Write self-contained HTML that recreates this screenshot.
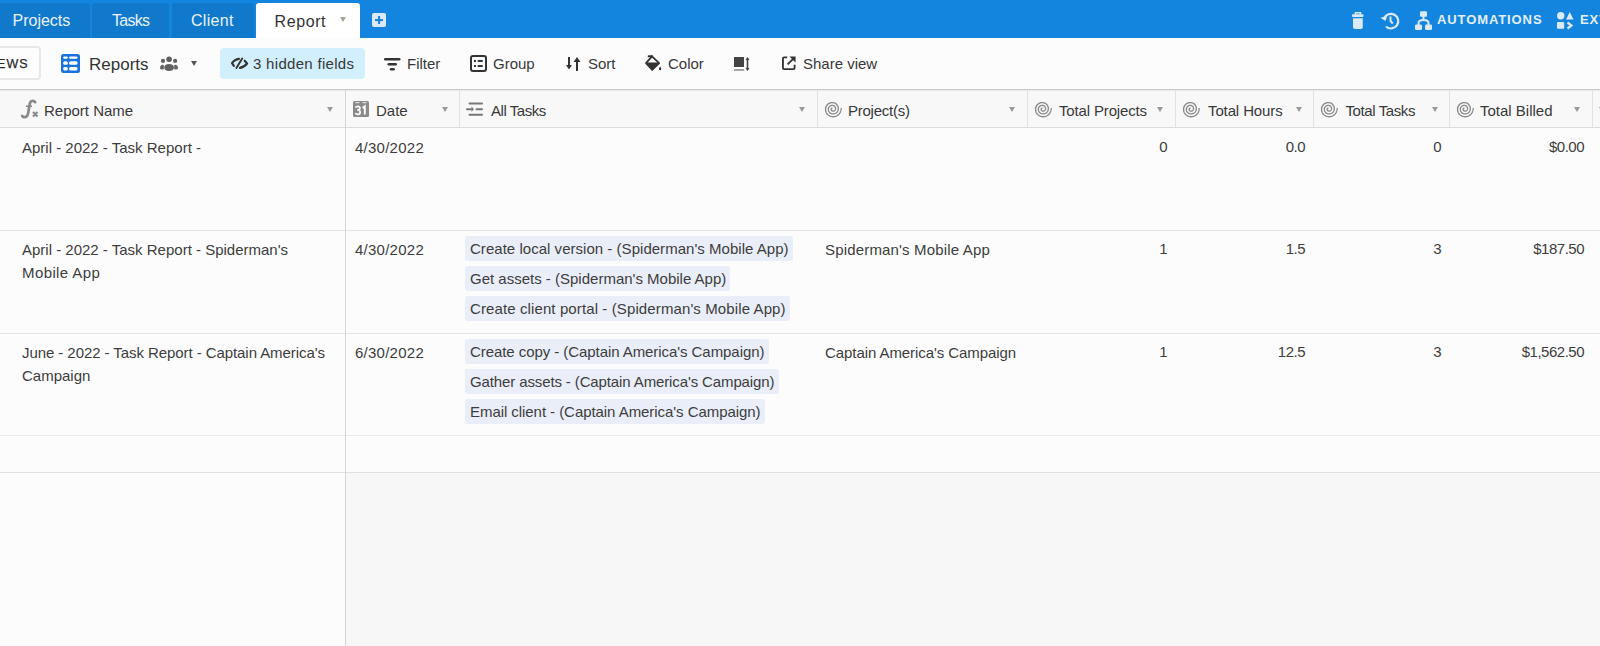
<!DOCTYPE html>
<html><head><meta charset="utf-8">
<style>
*{margin:0;padding:0;box-sizing:border-box}
html,body{width:1600px;height:646px;overflow:hidden;background:#fcfcfc;font-family:"Liberation Sans",sans-serif;color:#333;position:relative}
.a{position:absolute;white-space:nowrap}
svg{position:absolute;overflow:visible}
#top{position:absolute;left:0;top:0;width:1600px;height:38px;background:#1385de}
.tab{position:absolute;top:3px;height:35px;background:#1079cc;border-radius:3px 3px 0 0;color:#eaf2fb;font-size:16px;line-height:17px}
.tab span{position:absolute;top:9px}
#tb{position:absolute;left:0;top:38px;width:1600px;height:51px;background:#fcfcfc}
.t15{font-size:15px;line-height:17px;color:#383838}
#hdr{position:absolute;left:0;top:89px;width:1600px;height:39px;background:#f8f8f9;border-top:1px solid #c9c9c9;border-bottom:1px solid #dcdcdc}
#hdr2{position:absolute;left:0;top:90px;width:1600px;height:1px;background:#e9e9e9}
.arr{position:absolute;width:0;height:0;border-left:3.5px solid transparent;border-right:3.5px solid transparent;border-top:5px solid #9a9a9a}
.hv{position:absolute;top:90px;height:37px;width:1px;background:#e2e2e2}
.hl{position:absolute;height:1px;background:#e3e5e8;left:0;width:1600px}
.bt{font-size:15px;color:#3d3d3d;line-height:23px;position:absolute;white-space:nowrap}
.pill{position:absolute;left:465px;height:25px;background:#e9eef8;border-radius:3px;font-size:15px;line-height:25px;padding:0 4px 0 5px;color:#3d3d3d;white-space:nowrap}
.num{position:absolute;font-size:15px;color:#3d3d3d;line-height:17px;text-align:right;white-space:nowrap}
</style></head><body>

<div id="top">
  <div class="tab" style="left:-10px;width:100px"><span style="left:22.5px">Projects</span></div>
  <div class="tab" style="left:92px;width:77px"><span style="left:20px;letter-spacing:-0.7px">Tasks</span></div>
  <div class="tab" style="left:172px;width:82px"><span style="left:19px;letter-spacing:0.3px">Client</span></div>
  <div class="tab" style="left:256px;width:104px;background:#fff;color:#333"><span style="left:18.5px;top:10px;letter-spacing:0.6px">Report</span></div>
  <div class="arr" style="left:340px;top:16.5px;border-top-color:#a8a29a"></div>
  <svg style="left:372px;top:13px" width="14" height="14"><rect x="0" y="0" width="14" height="14" rx="2" fill="#dbe9f8"/><rect x="6.1" y="3" width="2" height="8" fill="#1385de"/><rect x="3" y="6.1" width="8" height="2" fill="#1385de"/></svg>
  <svg style="left:1352px;top:12px" width="12" height="17" viewBox="0 0 12 17"><path d="M3.5 2.6V0.8H8.5V2.6" fill="none" stroke="#dbe9f8" stroke-width="1.5"/><rect x="0" y="2.2" width="11.5" height="2.8" rx="1" fill="#dbe9f8"/><path d="M1 6.3H10.8V15Q10.8 16.9 9 16.9H2.8Q1 16.9 1 15Z" fill="#dbe9f8"/></svg>
  <svg style="left:1380px;top:11px" width="20" height="19" viewBox="0 0 20 19"><path d="M4.2 7.5A7.3 7.3 0 1 1 6 15.5" fill="none" stroke="#dbe9f8" stroke-width="2.2"/><path d="M0.5 6.8L5.5 10L7.2 4.8Z" fill="#dbe9f8"/><path d="M10.5 5.5V10L12.8 12.5" fill="none" stroke="#dbe9f8" stroke-width="2"/></svg>
  <svg style="left:1415px;top:11px" width="17" height="19" viewBox="0 0 17 19"><rect x="5" y="0.3" width="7" height="5.5" rx="1.2" fill="#dbe9f8"/><rect x="0" y="13.5" width="7" height="5.5" rx="1.2" fill="#dbe9f8"/><rect x="10" y="13.5" width="7" height="5.5" rx="1.2" fill="#dbe9f8"/><path d="M8.5 5V8M3.5 14V12Q3.5 9 8.5 9Q13.5 9 13.5 12V14" fill="none" stroke="#dbe9f8" stroke-width="2"/></svg>
  <div class="a" style="left:1437px;top:12px;font-size:13px;line-height:15px;font-weight:bold;color:#e3eefa;letter-spacing:0.9px">AUTOMATIONS</div>
  <svg style="left:1557px;top:12px" width="17" height="17" viewBox="0 0 17 17"><circle cx="3.7" cy="3.8" r="3.7" fill="#dbe9f8"/><path d="M12.8 0L16.5 7.5H9Z" fill="#dbe9f8"/><rect x="0" y="10" width="7.2" height="6.8" rx="1" fill="#dbe9f8"/><path d="M10.5 10.5L14.5 13.5L10.5 16.5" fill="none" stroke="#dbe9f8" stroke-width="2.2"/></svg>
  <div class="a" style="left:1580px;top:12px;font-size:13px;line-height:15px;font-weight:bold;color:#e3eefa;letter-spacing:0.9px">EXTENSIONS</div>
</div>


<div id="tb">
  <div class="a" style="left:-6px;top:8px;width:47px;height:34px;border:2px solid #e8e8e8;border-radius:4px;background:#fdfdfd"></div>
  <div class="a" style="left:-17px;top:19px;font-size:12.5px;line-height:14px;letter-spacing:1.1px;color:#2a2a2a;-webkit-text-stroke:0.25px #2a2a2a">VIEWS</div>
  <svg style="left:61px;top:16px" width="19" height="19" viewBox="0 0 19 19"><rect x="0" y="0" width="19" height="19" rx="2.5" fill="#1a72dc"/><rect x="2.2" y="2.4" width="4.6" height="2.4" rx="1.2" fill="#fff"/><rect x="8.1" y="2.4" width="8.4" height="2.4" rx="1.2" fill="#fff"/><rect x="2.2" y="7.2" width="4.6" height="3.5" rx="1.5" fill="#fff"/><rect x="8.1" y="7.2" width="8.4" height="3.5" rx="1.5" fill="#fff"/><rect x="2.2" y="13.1" width="4.6" height="3.3" rx="1.5" fill="#fff"/><rect x="8.1" y="13.1" width="8.4" height="3.3" rx="1.5" fill="#fff"/></svg>
  <div class="a" style="left:89px;top:17px;font-size:17px;line-height:19px;color:#333">Reports</div>
  <svg style="left:160px;top:18px" width="18" height="15" viewBox="0 0 18 15"><circle cx="9.1" cy="3.3" r="2.8" fill="#606060"/><circle cx="3" cy="4.9" r="2.1" fill="#606060"/><circle cx="15.1" cy="4.9" r="2.1" fill="#606060"/><path d="M4.3 11.5Q4.3 7.9 9.1 7.9Q13.9 7.9 13.9 11.5Q13.9 14.9 9.1 14.9Q4.3 14.9 4.3 11.5Z" fill="#606060"/><path d="M0 12.5Q0 8.8 3 8.8Q3.8 8.8 3.8 9.5V13.3Q2.5 13.5 0.8 13.3Z" fill="#606060"/><path d="M18 12.5Q18 8.8 15 8.8Q14.2 8.8 14.2 9.5V13.3Q15.5 13.5 17.2 13.3Z" fill="#606060"/></svg>
  <div class="arr" style="left:191px;top:23px;border-left-width:3.5px;border-right-width:3.5px;border-top:5.5px solid #555"></div>
  <div class="a" style="left:220px;top:10px;width:145px;height:31px;background:#d1effc;border-radius:4px"></div>
  <svg style="left:231px;top:19px" width="18" height="13" viewBox="0 0 18 13"><path d="M8 1.9Q3.5 2.4 1 6.2L2.9 8.9" fill="none" stroke="#333" stroke-width="2.1" stroke-linecap="round" stroke-linejoin="round"/><path d="M11.2 1.6L5.4 11" stroke="#333" stroke-width="1.9" stroke-linecap="round"/><path d="M13.7 3.7L16.1 6.5Q13.5 10 8.9 10.9" fill="none" stroke="#333" stroke-width="2.1" stroke-linecap="round" stroke-linejoin="round"/></svg>
  <div class="a t15" style="left:253px;top:17px;letter-spacing:0.3px">3 hidden fields</div>
  <svg style="left:384px;top:19.5px" width="17" height="13" viewBox="0 0 17 13"><rect x="0" y="0" width="16.5" height="2.6" rx="1.3" fill="#333"/><rect x="3.5" y="5" width="9.5" height="2.5" rx="1.25" fill="#333"/><rect x="5.8" y="10" width="5" height="2.5" rx="1.25" fill="#333"/></svg>
  <div class="a t15" style="left:407px;top:17px">Filter</div>
  <svg style="left:470px;top:17px" width="17" height="17" viewBox="0 0 17 17"><rect x="1" y="1" width="15" height="15" rx="2" fill="none" stroke="#333" stroke-width="2"/><rect x="4" y="5" width="2" height="2" fill="#333"/><rect x="7.5" y="5" width="5.5" height="2" rx="1" fill="#333"/><rect x="4" y="10" width="2" height="2" fill="#333"/><rect x="7.5" y="10" width="5.5" height="2" rx="1" fill="#333"/></svg>
  <div class="a t15" style="left:493px;top:17px">Group</div>
  <svg style="left:566px;top:19px" width="15" height="14" viewBox="0 0 15 14"><path d="M3 0V11" stroke="#333" stroke-width="2"/><path d="M0 8L3 12.5L6 8Z" fill="#333"/><path d="M11 3V14" stroke="#333" stroke-width="2"/><path d="M7.5 5L11 0L14.5 5Z" fill="#333"/></svg>
  <div class="a t15" style="left:588px;top:17px">Sort</div>
  <svg style="left:645px;top:17px" width="17" height="17" viewBox="0 0 17 17"><path d="M7 1.3L1 8.2L7.2 14.9L14.1 8.2Z" fill="none" stroke="#333" stroke-width="1.8" stroke-linejoin="round"/><path d="M1 7.5H14.2L7.2 14.9Z" fill="#333"/><path d="M3.6 1.3H7.1" stroke="#333" stroke-width="1.9" stroke-linecap="round"/><path d="M15.1 11.6Q16.4 13.2 16.3 14Q16.2 15.2 15.1 15.2Q14 15.2 13.9 14Q13.9 13.2 15.1 11.6Z" fill="#333"/></svg>
  <div class="a t15" style="left:668px;top:17px">Color</div>
  <svg style="left:734px;top:19px" width="16" height="14" viewBox="0 0 16 14"><rect x="0" y="0" width="10" height="10" fill="#444"/><rect x="0" y="12.2" width="10" height="1.5" fill="#888"/><path d="M13.5 1.5V12.5" stroke="#444" stroke-width="1.6"/><path d="M11.5 3L13.5 0L15.5 3Z M11.5 11L13.5 14L15.5 11Z" fill="#444"/></svg>
  <svg style="left:782px;top:18px" width="14" height="14" viewBox="0 0 15 15"><path d="M5.5 1.5H2.2Q1 1.5 1 2.7V12.8Q1 14 2.2 14H12.3Q13.5 14 13.5 12.8V9.5" fill="none" stroke="#333" stroke-width="2"/><path d="M6 9L12.5 2.5" stroke="#333" stroke-width="2"/><path d="M8 0.5H14.5V7Z" fill="#333"/></svg>
  <div class="a t15" style="left:803px;top:17px">Share view</div>
</div>

<div id="hdr"></div><div id="hdr2"></div>
<div class="hv" style="left:459px"></div>
<div class="hv" style="left:817px"></div>
<div class="hv" style="left:1027px"></div>
<div class="hv" style="left:1175px"></div>
<div class="hv" style="left:1313px"></div>
<div class="hv" style="left:1449px"></div>
<div class="hv" style="left:1592px"></div>
<svg style="left:21px;top:100px" width="18" height="18" viewBox="0 0 18 18"><path d="M14.2 2.2Q13 0.4 11 1Q9 1.6 8.6 4.5L7.2 13Q6.6 16.8 4 17.2Q2 17.4 1.2 16" fill="none" stroke="#8a8a8a" stroke-width="2.7" stroke-linecap="round"/><path d="M5 6.2H11" stroke="#8a8a8a" stroke-width="1.6"/><path d="M12 12L16.5 16.5M16.5 12L12 16.5" stroke="#8a8a8a" stroke-width="2.1"/></svg>
<div class="a t15" style="left:44px;top:102px">Report Name</div><div class="arr" style="left:327px;top:107px"></div>
<svg style="left:353px;top:101px" width="16" height="16" viewBox="0 0 16 16"><rect x="0" y="0" width="16" height="16" rx="1.5" fill="#8a8a8a"/><rect x="2.5" y="1" width="4" height="1.2" fill="#ddd"/><rect x="9.5" y="1" width="4" height="1.2" fill="#ddd"/><path d="M2.6 6.6Q3.2 5.3 4.8 5.3Q6.9 5.3 6.9 7.2Q6.9 8.6 5.2 9Q7.2 9.3 7.2 11Q7.2 13.4 4.8 13.4Q3 13.4 2.4 12" fill="none" stroke="#fff" stroke-width="1.7"/><path d="M4 9H5.5" stroke="#fff" stroke-width="1.5"/><path d="M11.8 13.6V5.4L9.6 6.9" fill="none" stroke="#fff" stroke-width="1.9"/></svg>
<div class="a t15" style="left:376px;top:102px">Date</div><div class="arr" style="left:442px;top:107px"></div>
<svg style="left:466px;top:102px" width="18" height="14" viewBox="0 0 18 14"><rect x="2.5" y="0.6" width="14.5" height="2" rx="1" fill="#777"/><rect x="0" y="6.2" width="6" height="2" rx="1" fill="#777"/><path d="M5.5 4.6L8 7.2L5.5 9.8Z" fill="#777"/><rect x="9.5" y="6.2" width="7.5" height="2" rx="1" fill="#777"/><rect x="2.5" y="11.8" width="14.5" height="2" rx="1" fill="#777"/></svg>
<div class="a t15" style="left:491px;top:102px;letter-spacing:-0.45px">All Tasks</div><div class="arr" style="left:799px;top:107px"></div>
<svg style="left:824px;top:101px" width="18" height="16" viewBox="0 0 18 16"><path d="M8.16 7.08 L8.07 7.09 L7.97 7.11 L7.88 7.15 L7.79 7.19 L7.70 7.24 L7.61 7.31 L7.52 7.38 L7.45 7.46 L7.37 7.55 L7.31 7.65 L7.25 7.76 L7.20 7.88 L7.16 8.00 L7.14 8.13 L7.12 8.27 L7.12 8.40 L7.12 8.54 L7.15 8.69 L7.18 8.83 L7.23 8.97 L7.29 9.11 L7.37 9.25 L7.46 9.38 L7.56 9.51 L7.68 9.62 L7.80 9.73 L7.94 9.83 L8.09 9.92 L8.25 10.00 L8.42 10.06 L8.60 10.11 L8.79 10.15 L8.97 10.16 L9.17 10.17 L9.36 10.15 L9.56 10.12 L9.76 10.07 L9.95 10.00 L10.14 9.91 L10.33 9.81 L10.50 9.68 L10.67 9.55 L10.83 9.39 L10.98 9.22 L11.11 9.04 L11.23 8.84 L11.33 8.63 L11.41 8.41 L11.48 8.18 L11.52 7.94 L11.55 7.69 L11.56 7.44 L11.54 7.19 L11.50 6.94 L11.44 6.69 L11.36 6.44 L11.25 6.20 L11.12 5.96 L10.98 5.73 L10.81 5.52 L10.62 5.32 L10.41 5.13 L10.18 4.96 L9.94 4.80 L9.68 4.67 L9.41 4.56 L9.13 4.47 L8.84 4.40 L8.54 4.36 L8.23 4.35 L7.93 4.36 L7.62 4.40 L7.31 4.46 L7.00 4.55 L6.70 4.67 L6.41 4.82 L6.13 4.99 L5.87 5.18 L5.62 5.40 L5.38 5.64 L5.17 5.91 L4.97 6.19 L4.81 6.49 L4.66 6.81 L4.54 7.14 L4.45 7.48 L4.39 7.84 L4.36 8.20 L4.36 8.56 L4.39 8.93 L4.45 9.30 L4.54 9.66 L4.67 10.01 L4.82 10.36 L5.01 10.70 L5.22 11.02 L5.47 11.32 L5.74 11.61 L6.04 11.87 L6.36 12.11 L6.70 12.32 L7.06 12.51 L7.44 12.66 L7.83 12.78 L8.24 12.87 L8.65 12.92 L9.07 12.94 L9.50 12.93 L9.92 12.88 L10.34 12.79 L10.76 12.66 L11.17 12.50 L11.56 12.31 L11.94 12.07 L12.30 11.81 L12.64 11.52 L12.95 11.19 L13.24 10.84 L13.50 10.46 L13.73 10.06 L13.92 9.63 L14.08 9.19 L14.21 8.74 L14.29 8.27 L14.34 7.80 L14.34 7.31 L14.30 6.83 L14.23 6.35 L14.11 5.87 L13.95 5.41 L13.75 4.95 L13.51 4.51 L13.23 4.09 L12.92 3.70 L12.57 3.32 L12.19 2.98 L11.78 2.67 L11.34 2.39 L10.88 2.15 L10.39 1.95 L9.89 1.79 L9.37 1.67 L8.84 1.59 L8.31 1.56 L7.76 1.57 L7.22 1.63 L6.69 1.74 L6.16 1.89 L5.64 2.09 L5.14 2.33 L4.66 2.62 L4.20 2.94 L3.77 3.31 L3.37 3.71 L3.00 4.15 L2.66 4.62 L2.37 5.12 L2.12 5.64 L1.91 6.19 L1.75 6.75 L1.64 7.33 L1.58 7.93 L1.56 8.52 L1.60 9.12 L1.68 9.72 L1.82 10.31 L2.01 10.89 L2.25 11.46 L2.53 12.00 L2.87 12.52 L3.24 13.02 L3.66 13.48 L4.12 13.91 L4.62 14.30 L5.15 14.65 L5.71 14.96 L6.30 15.22 L6.91 15.42 L7.54 15.58 L8.18 15.69 L8.83 15.74 L9.49 15.73 L10.15 15.67 L10.80 15.55 L11.44 15.38 L12.07 15.15 L12.69 14.87 L13.27 14.54 L13.83 14.16 L14.36 13.73 L14.86 13.25 L15.31 12.73 L15.72 12.18 L16.08 11.58 L16.40 10.96 L16.66 10.31 L16.87 9.63 L17.02 8.94 L17.11 8.24 L17.14 7.53" fill="none" stroke="#8a8a8a" stroke-width="1.35" stroke-linecap="round"/></svg>
<div class="a t15" style="left:848px;top:102px;letter-spacing:-0.25px">Project(s)</div><div class="arr" style="left:1009px;top:107px"></div>
<svg style="left:1034px;top:101px" width="18" height="16" viewBox="0 0 18 16"><path d="M8.16 7.08 L8.07 7.09 L7.97 7.11 L7.88 7.15 L7.79 7.19 L7.70 7.24 L7.61 7.31 L7.52 7.38 L7.45 7.46 L7.37 7.55 L7.31 7.65 L7.25 7.76 L7.20 7.88 L7.16 8.00 L7.14 8.13 L7.12 8.27 L7.12 8.40 L7.12 8.54 L7.15 8.69 L7.18 8.83 L7.23 8.97 L7.29 9.11 L7.37 9.25 L7.46 9.38 L7.56 9.51 L7.68 9.62 L7.80 9.73 L7.94 9.83 L8.09 9.92 L8.25 10.00 L8.42 10.06 L8.60 10.11 L8.79 10.15 L8.97 10.16 L9.17 10.17 L9.36 10.15 L9.56 10.12 L9.76 10.07 L9.95 10.00 L10.14 9.91 L10.33 9.81 L10.50 9.68 L10.67 9.55 L10.83 9.39 L10.98 9.22 L11.11 9.04 L11.23 8.84 L11.33 8.63 L11.41 8.41 L11.48 8.18 L11.52 7.94 L11.55 7.69 L11.56 7.44 L11.54 7.19 L11.50 6.94 L11.44 6.69 L11.36 6.44 L11.25 6.20 L11.12 5.96 L10.98 5.73 L10.81 5.52 L10.62 5.32 L10.41 5.13 L10.18 4.96 L9.94 4.80 L9.68 4.67 L9.41 4.56 L9.13 4.47 L8.84 4.40 L8.54 4.36 L8.23 4.35 L7.93 4.36 L7.62 4.40 L7.31 4.46 L7.00 4.55 L6.70 4.67 L6.41 4.82 L6.13 4.99 L5.87 5.18 L5.62 5.40 L5.38 5.64 L5.17 5.91 L4.97 6.19 L4.81 6.49 L4.66 6.81 L4.54 7.14 L4.45 7.48 L4.39 7.84 L4.36 8.20 L4.36 8.56 L4.39 8.93 L4.45 9.30 L4.54 9.66 L4.67 10.01 L4.82 10.36 L5.01 10.70 L5.22 11.02 L5.47 11.32 L5.74 11.61 L6.04 11.87 L6.36 12.11 L6.70 12.32 L7.06 12.51 L7.44 12.66 L7.83 12.78 L8.24 12.87 L8.65 12.92 L9.07 12.94 L9.50 12.93 L9.92 12.88 L10.34 12.79 L10.76 12.66 L11.17 12.50 L11.56 12.31 L11.94 12.07 L12.30 11.81 L12.64 11.52 L12.95 11.19 L13.24 10.84 L13.50 10.46 L13.73 10.06 L13.92 9.63 L14.08 9.19 L14.21 8.74 L14.29 8.27 L14.34 7.80 L14.34 7.31 L14.30 6.83 L14.23 6.35 L14.11 5.87 L13.95 5.41 L13.75 4.95 L13.51 4.51 L13.23 4.09 L12.92 3.70 L12.57 3.32 L12.19 2.98 L11.78 2.67 L11.34 2.39 L10.88 2.15 L10.39 1.95 L9.89 1.79 L9.37 1.67 L8.84 1.59 L8.31 1.56 L7.76 1.57 L7.22 1.63 L6.69 1.74 L6.16 1.89 L5.64 2.09 L5.14 2.33 L4.66 2.62 L4.20 2.94 L3.77 3.31 L3.37 3.71 L3.00 4.15 L2.66 4.62 L2.37 5.12 L2.12 5.64 L1.91 6.19 L1.75 6.75 L1.64 7.33 L1.58 7.93 L1.56 8.52 L1.60 9.12 L1.68 9.72 L1.82 10.31 L2.01 10.89 L2.25 11.46 L2.53 12.00 L2.87 12.52 L3.24 13.02 L3.66 13.48 L4.12 13.91 L4.62 14.30 L5.15 14.65 L5.71 14.96 L6.30 15.22 L6.91 15.42 L7.54 15.58 L8.18 15.69 L8.83 15.74 L9.49 15.73 L10.15 15.67 L10.80 15.55 L11.44 15.38 L12.07 15.15 L12.69 14.87 L13.27 14.54 L13.83 14.16 L14.36 13.73 L14.86 13.25 L15.31 12.73 L15.72 12.18 L16.08 11.58 L16.40 10.96 L16.66 10.31 L16.87 9.63 L17.02 8.94 L17.11 8.24 L17.14 7.53" fill="none" stroke="#8a8a8a" stroke-width="1.35" stroke-linecap="round"/></svg>
<div class="a t15" style="left:1059px;top:102px;letter-spacing:-0.15px">Total Projects</div><div class="arr" style="left:1157px;top:107px"></div>
<svg style="left:1182px;top:101px" width="18" height="16" viewBox="0 0 18 16"><path d="M8.16 7.08 L8.07 7.09 L7.97 7.11 L7.88 7.15 L7.79 7.19 L7.70 7.24 L7.61 7.31 L7.52 7.38 L7.45 7.46 L7.37 7.55 L7.31 7.65 L7.25 7.76 L7.20 7.88 L7.16 8.00 L7.14 8.13 L7.12 8.27 L7.12 8.40 L7.12 8.54 L7.15 8.69 L7.18 8.83 L7.23 8.97 L7.29 9.11 L7.37 9.25 L7.46 9.38 L7.56 9.51 L7.68 9.62 L7.80 9.73 L7.94 9.83 L8.09 9.92 L8.25 10.00 L8.42 10.06 L8.60 10.11 L8.79 10.15 L8.97 10.16 L9.17 10.17 L9.36 10.15 L9.56 10.12 L9.76 10.07 L9.95 10.00 L10.14 9.91 L10.33 9.81 L10.50 9.68 L10.67 9.55 L10.83 9.39 L10.98 9.22 L11.11 9.04 L11.23 8.84 L11.33 8.63 L11.41 8.41 L11.48 8.18 L11.52 7.94 L11.55 7.69 L11.56 7.44 L11.54 7.19 L11.50 6.94 L11.44 6.69 L11.36 6.44 L11.25 6.20 L11.12 5.96 L10.98 5.73 L10.81 5.52 L10.62 5.32 L10.41 5.13 L10.18 4.96 L9.94 4.80 L9.68 4.67 L9.41 4.56 L9.13 4.47 L8.84 4.40 L8.54 4.36 L8.23 4.35 L7.93 4.36 L7.62 4.40 L7.31 4.46 L7.00 4.55 L6.70 4.67 L6.41 4.82 L6.13 4.99 L5.87 5.18 L5.62 5.40 L5.38 5.64 L5.17 5.91 L4.97 6.19 L4.81 6.49 L4.66 6.81 L4.54 7.14 L4.45 7.48 L4.39 7.84 L4.36 8.20 L4.36 8.56 L4.39 8.93 L4.45 9.30 L4.54 9.66 L4.67 10.01 L4.82 10.36 L5.01 10.70 L5.22 11.02 L5.47 11.32 L5.74 11.61 L6.04 11.87 L6.36 12.11 L6.70 12.32 L7.06 12.51 L7.44 12.66 L7.83 12.78 L8.24 12.87 L8.65 12.92 L9.07 12.94 L9.50 12.93 L9.92 12.88 L10.34 12.79 L10.76 12.66 L11.17 12.50 L11.56 12.31 L11.94 12.07 L12.30 11.81 L12.64 11.52 L12.95 11.19 L13.24 10.84 L13.50 10.46 L13.73 10.06 L13.92 9.63 L14.08 9.19 L14.21 8.74 L14.29 8.27 L14.34 7.80 L14.34 7.31 L14.30 6.83 L14.23 6.35 L14.11 5.87 L13.95 5.41 L13.75 4.95 L13.51 4.51 L13.23 4.09 L12.92 3.70 L12.57 3.32 L12.19 2.98 L11.78 2.67 L11.34 2.39 L10.88 2.15 L10.39 1.95 L9.89 1.79 L9.37 1.67 L8.84 1.59 L8.31 1.56 L7.76 1.57 L7.22 1.63 L6.69 1.74 L6.16 1.89 L5.64 2.09 L5.14 2.33 L4.66 2.62 L4.20 2.94 L3.77 3.31 L3.37 3.71 L3.00 4.15 L2.66 4.62 L2.37 5.12 L2.12 5.64 L1.91 6.19 L1.75 6.75 L1.64 7.33 L1.58 7.93 L1.56 8.52 L1.60 9.12 L1.68 9.72 L1.82 10.31 L2.01 10.89 L2.25 11.46 L2.53 12.00 L2.87 12.52 L3.24 13.02 L3.66 13.48 L4.12 13.91 L4.62 14.30 L5.15 14.65 L5.71 14.96 L6.30 15.22 L6.91 15.42 L7.54 15.58 L8.18 15.69 L8.83 15.74 L9.49 15.73 L10.15 15.67 L10.80 15.55 L11.44 15.38 L12.07 15.15 L12.69 14.87 L13.27 14.54 L13.83 14.16 L14.36 13.73 L14.86 13.25 L15.31 12.73 L15.72 12.18 L16.08 11.58 L16.40 10.96 L16.66 10.31 L16.87 9.63 L17.02 8.94 L17.11 8.24 L17.14 7.53" fill="none" stroke="#8a8a8a" stroke-width="1.35" stroke-linecap="round"/></svg>
<div class="a t15" style="left:1208px;top:102px;letter-spacing:-0.12px">Total Hours</div><div class="arr" style="left:1296px;top:107px"></div>
<svg style="left:1320px;top:101px" width="18" height="16" viewBox="0 0 18 16"><path d="M8.16 7.08 L8.07 7.09 L7.97 7.11 L7.88 7.15 L7.79 7.19 L7.70 7.24 L7.61 7.31 L7.52 7.38 L7.45 7.46 L7.37 7.55 L7.31 7.65 L7.25 7.76 L7.20 7.88 L7.16 8.00 L7.14 8.13 L7.12 8.27 L7.12 8.40 L7.12 8.54 L7.15 8.69 L7.18 8.83 L7.23 8.97 L7.29 9.11 L7.37 9.25 L7.46 9.38 L7.56 9.51 L7.68 9.62 L7.80 9.73 L7.94 9.83 L8.09 9.92 L8.25 10.00 L8.42 10.06 L8.60 10.11 L8.79 10.15 L8.97 10.16 L9.17 10.17 L9.36 10.15 L9.56 10.12 L9.76 10.07 L9.95 10.00 L10.14 9.91 L10.33 9.81 L10.50 9.68 L10.67 9.55 L10.83 9.39 L10.98 9.22 L11.11 9.04 L11.23 8.84 L11.33 8.63 L11.41 8.41 L11.48 8.18 L11.52 7.94 L11.55 7.69 L11.56 7.44 L11.54 7.19 L11.50 6.94 L11.44 6.69 L11.36 6.44 L11.25 6.20 L11.12 5.96 L10.98 5.73 L10.81 5.52 L10.62 5.32 L10.41 5.13 L10.18 4.96 L9.94 4.80 L9.68 4.67 L9.41 4.56 L9.13 4.47 L8.84 4.40 L8.54 4.36 L8.23 4.35 L7.93 4.36 L7.62 4.40 L7.31 4.46 L7.00 4.55 L6.70 4.67 L6.41 4.82 L6.13 4.99 L5.87 5.18 L5.62 5.40 L5.38 5.64 L5.17 5.91 L4.97 6.19 L4.81 6.49 L4.66 6.81 L4.54 7.14 L4.45 7.48 L4.39 7.84 L4.36 8.20 L4.36 8.56 L4.39 8.93 L4.45 9.30 L4.54 9.66 L4.67 10.01 L4.82 10.36 L5.01 10.70 L5.22 11.02 L5.47 11.32 L5.74 11.61 L6.04 11.87 L6.36 12.11 L6.70 12.32 L7.06 12.51 L7.44 12.66 L7.83 12.78 L8.24 12.87 L8.65 12.92 L9.07 12.94 L9.50 12.93 L9.92 12.88 L10.34 12.79 L10.76 12.66 L11.17 12.50 L11.56 12.31 L11.94 12.07 L12.30 11.81 L12.64 11.52 L12.95 11.19 L13.24 10.84 L13.50 10.46 L13.73 10.06 L13.92 9.63 L14.08 9.19 L14.21 8.74 L14.29 8.27 L14.34 7.80 L14.34 7.31 L14.30 6.83 L14.23 6.35 L14.11 5.87 L13.95 5.41 L13.75 4.95 L13.51 4.51 L13.23 4.09 L12.92 3.70 L12.57 3.32 L12.19 2.98 L11.78 2.67 L11.34 2.39 L10.88 2.15 L10.39 1.95 L9.89 1.79 L9.37 1.67 L8.84 1.59 L8.31 1.56 L7.76 1.57 L7.22 1.63 L6.69 1.74 L6.16 1.89 L5.64 2.09 L5.14 2.33 L4.66 2.62 L4.20 2.94 L3.77 3.31 L3.37 3.71 L3.00 4.15 L2.66 4.62 L2.37 5.12 L2.12 5.64 L1.91 6.19 L1.75 6.75 L1.64 7.33 L1.58 7.93 L1.56 8.52 L1.60 9.12 L1.68 9.72 L1.82 10.31 L2.01 10.89 L2.25 11.46 L2.53 12.00 L2.87 12.52 L3.24 13.02 L3.66 13.48 L4.12 13.91 L4.62 14.30 L5.15 14.65 L5.71 14.96 L6.30 15.22 L6.91 15.42 L7.54 15.58 L8.18 15.69 L8.83 15.74 L9.49 15.73 L10.15 15.67 L10.80 15.55 L11.44 15.38 L12.07 15.15 L12.69 14.87 L13.27 14.54 L13.83 14.16 L14.36 13.73 L14.86 13.25 L15.31 12.73 L15.72 12.18 L16.08 11.58 L16.40 10.96 L16.66 10.31 L16.87 9.63 L17.02 8.94 L17.11 8.24 L17.14 7.53" fill="none" stroke="#8a8a8a" stroke-width="1.35" stroke-linecap="round"/></svg>
<div class="a t15" style="left:1345.5px;top:102px;letter-spacing:-0.4px">Total Tasks</div><div class="arr" style="left:1432px;top:107px"></div>
<svg style="left:1456px;top:101px" width="18" height="16" viewBox="0 0 18 16"><path d="M8.16 7.08 L8.07 7.09 L7.97 7.11 L7.88 7.15 L7.79 7.19 L7.70 7.24 L7.61 7.31 L7.52 7.38 L7.45 7.46 L7.37 7.55 L7.31 7.65 L7.25 7.76 L7.20 7.88 L7.16 8.00 L7.14 8.13 L7.12 8.27 L7.12 8.40 L7.12 8.54 L7.15 8.69 L7.18 8.83 L7.23 8.97 L7.29 9.11 L7.37 9.25 L7.46 9.38 L7.56 9.51 L7.68 9.62 L7.80 9.73 L7.94 9.83 L8.09 9.92 L8.25 10.00 L8.42 10.06 L8.60 10.11 L8.79 10.15 L8.97 10.16 L9.17 10.17 L9.36 10.15 L9.56 10.12 L9.76 10.07 L9.95 10.00 L10.14 9.91 L10.33 9.81 L10.50 9.68 L10.67 9.55 L10.83 9.39 L10.98 9.22 L11.11 9.04 L11.23 8.84 L11.33 8.63 L11.41 8.41 L11.48 8.18 L11.52 7.94 L11.55 7.69 L11.56 7.44 L11.54 7.19 L11.50 6.94 L11.44 6.69 L11.36 6.44 L11.25 6.20 L11.12 5.96 L10.98 5.73 L10.81 5.52 L10.62 5.32 L10.41 5.13 L10.18 4.96 L9.94 4.80 L9.68 4.67 L9.41 4.56 L9.13 4.47 L8.84 4.40 L8.54 4.36 L8.23 4.35 L7.93 4.36 L7.62 4.40 L7.31 4.46 L7.00 4.55 L6.70 4.67 L6.41 4.82 L6.13 4.99 L5.87 5.18 L5.62 5.40 L5.38 5.64 L5.17 5.91 L4.97 6.19 L4.81 6.49 L4.66 6.81 L4.54 7.14 L4.45 7.48 L4.39 7.84 L4.36 8.20 L4.36 8.56 L4.39 8.93 L4.45 9.30 L4.54 9.66 L4.67 10.01 L4.82 10.36 L5.01 10.70 L5.22 11.02 L5.47 11.32 L5.74 11.61 L6.04 11.87 L6.36 12.11 L6.70 12.32 L7.06 12.51 L7.44 12.66 L7.83 12.78 L8.24 12.87 L8.65 12.92 L9.07 12.94 L9.50 12.93 L9.92 12.88 L10.34 12.79 L10.76 12.66 L11.17 12.50 L11.56 12.31 L11.94 12.07 L12.30 11.81 L12.64 11.52 L12.95 11.19 L13.24 10.84 L13.50 10.46 L13.73 10.06 L13.92 9.63 L14.08 9.19 L14.21 8.74 L14.29 8.27 L14.34 7.80 L14.34 7.31 L14.30 6.83 L14.23 6.35 L14.11 5.87 L13.95 5.41 L13.75 4.95 L13.51 4.51 L13.23 4.09 L12.92 3.70 L12.57 3.32 L12.19 2.98 L11.78 2.67 L11.34 2.39 L10.88 2.15 L10.39 1.95 L9.89 1.79 L9.37 1.67 L8.84 1.59 L8.31 1.56 L7.76 1.57 L7.22 1.63 L6.69 1.74 L6.16 1.89 L5.64 2.09 L5.14 2.33 L4.66 2.62 L4.20 2.94 L3.77 3.31 L3.37 3.71 L3.00 4.15 L2.66 4.62 L2.37 5.12 L2.12 5.64 L1.91 6.19 L1.75 6.75 L1.64 7.33 L1.58 7.93 L1.56 8.52 L1.60 9.12 L1.68 9.72 L1.82 10.31 L2.01 10.89 L2.25 11.46 L2.53 12.00 L2.87 12.52 L3.24 13.02 L3.66 13.48 L4.12 13.91 L4.62 14.30 L5.15 14.65 L5.71 14.96 L6.30 15.22 L6.91 15.42 L7.54 15.58 L8.18 15.69 L8.83 15.74 L9.49 15.73 L10.15 15.67 L10.80 15.55 L11.44 15.38 L12.07 15.15 L12.69 14.87 L13.27 14.54 L13.83 14.16 L14.36 13.73 L14.86 13.25 L15.31 12.73 L15.72 12.18 L16.08 11.58 L16.40 10.96 L16.66 10.31 L16.87 9.63 L17.02 8.94 L17.11 8.24 L17.14 7.53" fill="none" stroke="#8a8a8a" stroke-width="1.35" stroke-linecap="round"/></svg>
<div class="a t15" style="left:1480px;top:102px;letter-spacing:0px">Total Billed</div><div class="arr" style="left:1574px;top:107px"></div>
<div class="arr" style="left:1599px;top:107px"></div>

<div class="hl" style="top:230px"></div>
<div class="hl" style="top:333px"></div>
<div class="hl" style="top:435px;background:#e6eaf0"></div>
<div class="hl" style="top:472px;background:#dfe0e3"></div>
<div class="a" style="left:346px;top:473px;width:1254px;height:173px;background:#f7f7f8"></div>
<div class="a" style="left:345px;top:90px;width:1px;height:556px;background:#d4d4d4"></div>
<div class="bt" style="left:22px;top:136px">April - 2022 - Task Report -</div>
<div class="bt" style="left:355px;top:136px;letter-spacing:0.25px">4/30/2022</div>
<div class="num" style="right:433px;top:138px;letter-spacing:-0.5px">0</div>
<div class="num" style="right:295px;top:138px;letter-spacing:-0.5px">0.0</div>
<div class="num" style="right:159px;top:138px;letter-spacing:-0.5px">0</div>
<div class="num" style="right:16px;top:138px;letter-spacing:-0.5px">$0.00</div>
<div class="bt" style="left:22px;top:238px">April - 2022 - Task Report - Spiderman's<br><span style='letter-spacing:0.4px'>Mobile App</span></div>
<div class="bt" style="left:355px;top:238px;letter-spacing:0.25px">4/30/2022</div>
<div class="pill" style="top:236px;width:328px;letter-spacing:0.03px">Create local version - (Spiderman's Mobile App)</div>
<div class="pill" style="top:266px;width:265px;letter-spacing:0px">Get assets - (Spiderman's Mobile App)</div>
<div class="pill" style="top:296px;width:325px;letter-spacing:0.11px">Create client portal - (Spiderman's Mobile App)</div>
<div class="bt" style="left:825px;top:238px;letter-spacing:0.17px">Spiderman's Mobile App</div>
<div class="num" style="right:433px;top:240px;letter-spacing:-0.5px">1</div>
<div class="num" style="right:295px;top:240px;letter-spacing:-0.5px">1.5</div>
<div class="num" style="right:159px;top:240px;letter-spacing:-0.5px">3</div>
<div class="num" style="right:16px;top:240px;letter-spacing:-0.5px">$187.50</div>
<div class="bt" style="left:22px;top:341px"><span style='letter-spacing:-0.07px'>June - 2022 - Task Report - Captain America's</span><br>Campaign</div>
<div class="bt" style="left:355px;top:341px;letter-spacing:0.25px">6/30/2022</div>
<div class="pill" style="top:339px;width:304px;letter-spacing:-0.066px">Create copy - (Captain America's Campaign)</div>
<div class="pill" style="top:369px;width:314px;letter-spacing:-0.12px">Gather assets - (Captain America's Campaign)</div>
<div class="pill" style="top:399px;width:300px;letter-spacing:-0.057px">Email client - (Captain America's Campaign)</div>
<div class="bt" style="left:825px;top:341px;letter-spacing:-0.07px">Captain America's Campaign</div>
<div class="num" style="right:433px;top:343px;letter-spacing:-0.5px">1</div>
<div class="num" style="right:295px;top:343px;letter-spacing:-0.5px">12.5</div>
<div class="num" style="right:159px;top:343px;letter-spacing:-0.5px">3</div>
<div class="num" style="right:16px;top:343px;letter-spacing:-0.5px">$1,562.50</div>

</body></html>
